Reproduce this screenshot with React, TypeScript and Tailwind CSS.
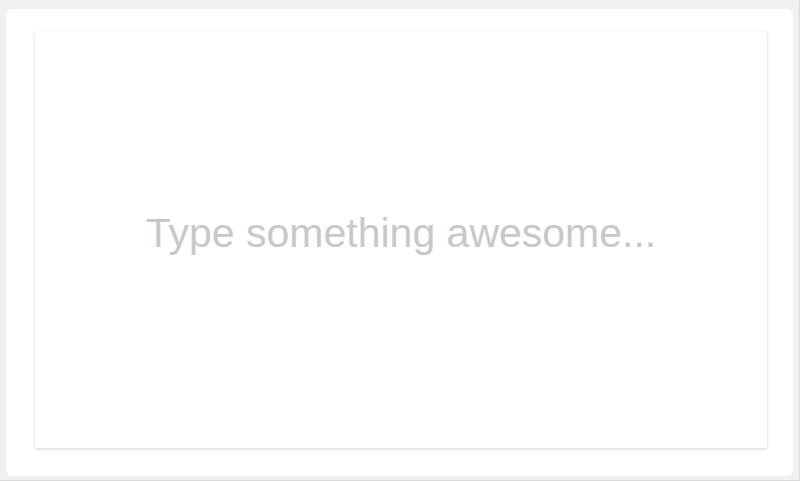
export default function App() {
  return (
    <div className="h-[481px] w-[800px] bg-[#f0f0f0] pl-[6px] pr-[6px] pt-[9px] pb-[4px] border-r border-b border-[#d9d9d9]">
      <div className="h-full w-full rounded-[6px] bg-white pl-[29px] pr-[26px] pt-[23px] pb-[28px]">
        <div className="flex h-full w-full items-center justify-center bg-white shadow-[0_1px_3px_rgba(0,0,0,0.18)]">
          <p className="font-['Liberation_Sans',Arial,sans-serif] text-[41px] text-[#c8c8c8] -mt-[12px]">
            Type something awesome...
          </p>
        </div>
      </div>
    </div>
  )
}
